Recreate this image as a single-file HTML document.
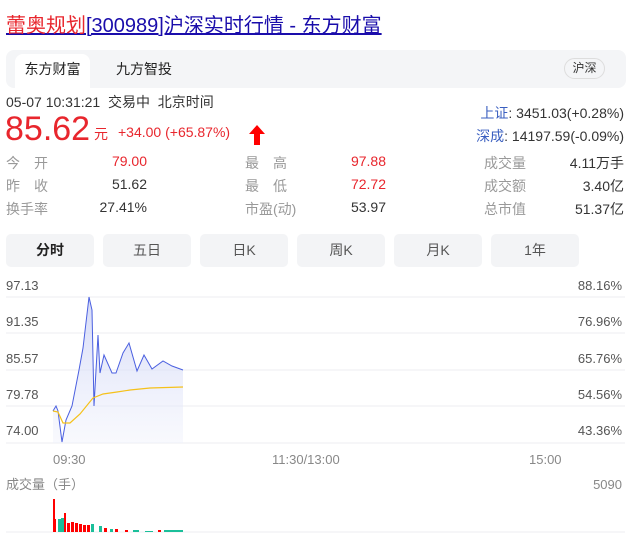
<!DOCTYPE html>
<html><head><meta charset="utf-8"><style>
*{margin:0;padding:0;box-sizing:border-box}
body{width:638px;height:541px;background:#fff;font-family:"Liberation Sans","Noto Sans CJK SC",sans-serif;position:relative;overflow:hidden;color:#333}
.a{position:absolute;white-space:nowrap}
.t{font-size:20px;top:9px;left:6px;text-decoration:underline;color:#1a0dab}
.g{font-size:14px;color:#999}
.v{font-size:14px;color:#333;text-align:right}
.r{color:#e8262d}
.btn{position:absolute;top:234px;width:88px;height:33px;background:#f3f4f6;border-radius:5px;text-align:center;line-height:33px;font-size:14px;color:#555}
</style></head><body>
<div class="a t"><span style="color:#e8262d">蕾奥规划</span>[300989]沪深实时行情 - 东方财富</div>
<div class="a" style="left:6px;top:50px;width:620px;height:38px;background:#f4f5f7;border-radius:8px"></div>
<div class="a" style="left:15px;top:54px;width:75px;height:34px;background:#fff;border-radius:8px 8px 0 0;text-align:center;line-height:30px;font-size:14px;color:#222">东方财富</div>
<div class="a" style="left:116px;top:54px;line-height:30px;font-size:14px;color:#222">九方智投</div>
<div class="a" style="left:564px;top:58px;width:41px;height:21px;border:1px solid #ddd;border-radius:11px;font-size:12px;line-height:19px;text-align:center;color:#333">沪深</div>
<div class="a" style="left:6px;top:92px;font-size:14px;color:#333">05-07 10:31:21&nbsp; 交易中&nbsp; 北京时间</div>
<div class="a r" style="left:5px;top:110px;font-size:34px">85.62</div>
<div class="a r" style="left:94px;top:124px;font-size:14px">元</div>
<div class="a r" style="left:118px;top:124px;font-size:14px">+34.00 (+65.87%)</div>
<svg class="a" style="left:249px;top:125px" width="16" height="20"><path d="M8 0L16 9H11V20H5V9H0Z" fill="#f00"/></svg>
<div class="a" style="right:14px;top:103px;font-size:14px"><span style="color:#3a5fc0">上证</span>: 3451.03(+0.28%)</div>
<div class="a" style="right:14px;top:126px;font-size:14px"><span style="color:#3a5fc0">深成</span>: 14197.59(-0.09%)</div>
<div class="a g" style="left:6px;top:153px">今　开</div><div class="a v r" style="right:491px;top:153px">79.00</div>
<div class="a g" style="left:6px;top:176px">昨　收</div><div class="a v" style="right:491px;top:176px">51.62</div>
<div class="a g" style="left:6px;top:199px">换手率</div><div class="a v" style="right:491px;top:199px">27.41%</div>
<div class="a g" style="left:245px;top:153px">最　高</div><div class="a v r" style="right:252px;top:153px">97.88</div>
<div class="a g" style="left:245px;top:176px">最　低</div><div class="a v r" style="right:252px;top:176px">72.72</div>
<div class="a g" style="left:245px;top:199px">市盈(动)</div><div class="a v" style="right:252px;top:199px">53.97</div>
<div class="a g" style="left:484px;top:153px">成交量</div><div class="a v" style="right:14px;top:153px">4.11万手</div>
<div class="a g" style="left:484px;top:176px">成交额</div><div class="a v" style="right:14px;top:176px">3.40亿</div>
<div class="a g" style="left:484px;top:199px">总市值</div><div class="a v" style="right:14px;top:199px">51.37亿</div>
<div class="btn" style="left:6px;color:#222;font-weight:bold">分时</div>
<div class="btn" style="left:103px">五日</div>
<div class="btn" style="left:200px">日K</div>
<div class="btn" style="left:297px">周K</div>
<div class="btn" style="left:394px">月K</div>
<div class="btn" style="left:491px">1年</div>
<svg class="a" style="left:0;top:0" width="638" height="541">
<defs><linearGradient id="f" x1="0" y1="0" x2="0" y2="1"><stop offset="0" stop-color="#c9d0f5" stop-opacity=".8"/><stop offset="1" stop-color="#eef0fb" stop-opacity=".4"/></linearGradient></defs>
<g stroke="#eceef2" stroke-width="1"><line x1="6" y1="297" x2="625" y2="297"/><line x1="6" y1="333" x2="625" y2="333"/><line x1="6" y1="370" x2="625" y2="370"/><line x1="6" y1="406" x2="625" y2="406"/><line x1="6" y1="443" x2="625" y2="443"/><line x1="6" y1="532" x2="625" y2="532"/></g>
<path d="M53 411L56 406L58 411L62 442L66 420L72 406L79 370L83 348L89 297L92 310L94 406L98 335L100 373L104 355L112 373L116 373L123 353L129 343L137 371L144 355L152 369L163 361L172 366L183 370L183 443L53 443Z" fill="url(#f)"/>
<path d="M53 411L56 406L58 411L62 442L66 420L72 406L79 370L83 348L89 297L92 310L94 406L98 335L100 373L104 355L112 373L116 373L123 353L129 343L137 371L144 355L152 369L163 361L172 366L183 370" fill="none" stroke="#4a5fe0" stroke-width="1"/>
<path d="M53 411L58 412L63 423L70 423L80 414L93 398L103 394L117 392L130 390L150 388L183 387" fill="none" stroke="#f5c11a" stroke-width="1.2"/>
<g font-size="13" fill="#555"><text x="6" y="290">97.13</text><text x="6" y="326">91.35</text><text x="6" y="363">85.57</text><text x="6" y="399">79.78</text><text x="6" y="435">74.00</text>
<text x="622" y="290" text-anchor="end">88.16%</text><text x="622" y="326" text-anchor="end">76.96%</text><text x="622" y="363" text-anchor="end">65.76%</text><text x="622" y="399" text-anchor="end">54.56%</text><text x="622" y="435" text-anchor="end">43.36%</text></g>
<g font-size="13" fill="#888"><text x="53" y="464">09:30</text><text x="272" y="464">11:30/13:00</text><text x="529" y="464">15:00</text>
<text x="6" y="489" font-size="13">成交量（手）</text><text x="622" y="489" text-anchor="end">5090</text></g>
<g fill="#f00"><rect x="53" y="499" width="2" height="33"/><rect x="54" y="519" width="2" height="13"/><rect x="64" y="513" width="2" height="19"/><rect x="67" y="523" width="3" height="9"/><rect x="71" y="522" width="3" height="10"/><rect x="75" y="523" width="3" height="9"/><rect x="79" y="524" width="3" height="8"/><rect x="83" y="525" width="3" height="7"/><rect x="87" y="525" width="3" height="7"/><rect x="104" y="528" width="3" height="4"/><rect x="115" y="529" width="3" height="3"/><rect x="125" y="530" width="3" height="2"/><rect x="158" y="530" width="3" height="2"/></g>
<g fill="#1bbf9a"><rect x="58" y="519" width="3" height="13"/><rect x="61" y="518" width="3" height="14"/><rect x="91" y="524" width="3" height="8"/><rect x="99" y="526" width="3" height="6"/><rect x="110" y="529" width="3" height="3"/><rect x="133" y="530" width="6" height="2"/><rect x="145" y="531" width="8" height="1"/><rect x="164" y="530" width="19" height="2"/></g>
</svg>
</body></html>
